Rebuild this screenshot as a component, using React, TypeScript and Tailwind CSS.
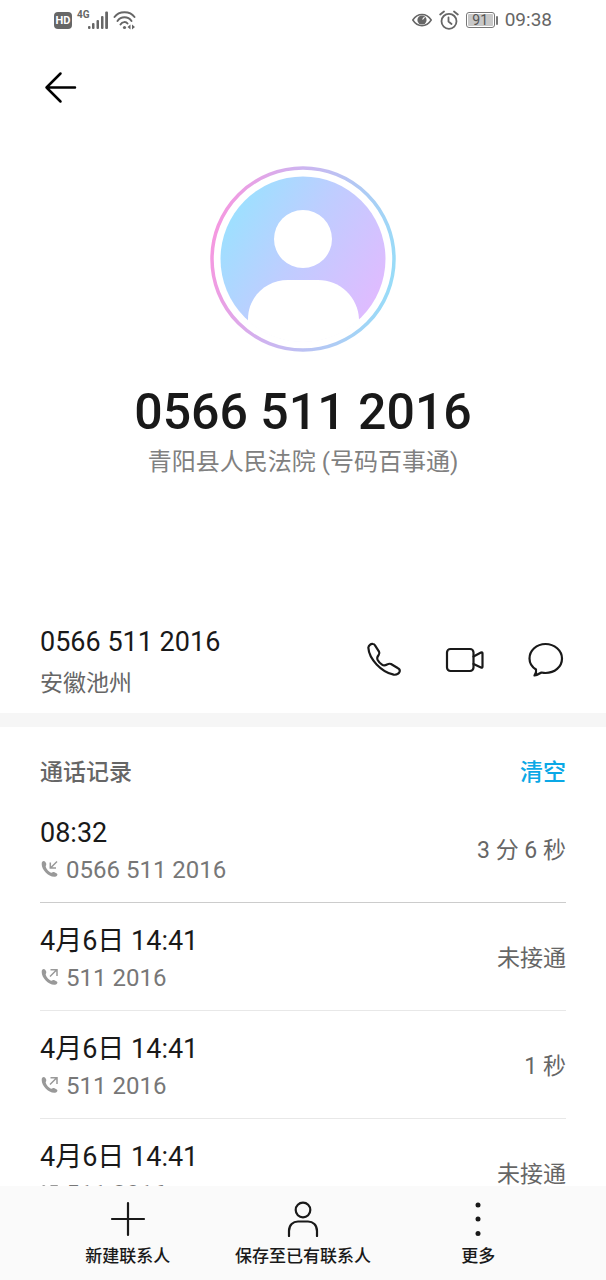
import React from 'react';

interface CallRecord {
  time: string;
  number: string;
  result: string;
  direction: 'in' | 'out';
}

const records: CallRecord[] = [
  { time: '08:32', number: '0566 511 2016', result: '3 分 6 秒', direction: 'in' },
  { time: '4月6日 14:41', number: '511 2016', result: '未接通', direction: 'out' },
  { time: '4月6日 14:41', number: '511 2016', result: '1 秒', direction: 'out' },
  { time: '4月6日 14:41', number: '511 2016', result: '未接通', direction: 'out' },
];

const StatusBar: React.FC = () => (
  <div className="flex h-10 shrink-0 items-center justify-between px-[54px] text-[#666]">
    <div className="flex items-center gap-1">
      <span className="flex h-[17px] w-[18px] items-center justify-center rounded-sm bg-[#666] text-[11px] font-bold leading-none text-white">HD</span>
      <svg viewBox="0 0 32 22" className="h-[22px] w-8" fill="currentColor">
        <text x="1" y="9" fontSize="10" fontWeight="700">4G</text>
        <rect x="12" y="17" width="2.500" height="3" rx="1" />
        <rect x="16" y="14" width="2.500" height="6" rx="1" />
        <rect x="20.500" y="11" width="2.500" height="9" rx="1" />
        <rect x="25" y="7" width="2.500" height="13" rx="1" />
        <rect x="29.200" y="2.500" width="2.800" height="17.500" rx="1" />
      </svg>
      <svg viewBox="0 0 24 22" className="h-[22px] w-6" fill="none" stroke="currentColor" strokeWidth="2" strokeLinecap="round">
        <path d="M2.500 8 C7 1.500 18 1.500 22.500 8" />
        <path d="M5.500 12 C9 7 16 7 19.500 12" />
        <path d="M8.500 15.500 C10.500 12.500 14 12.500 15.500 14.500" />
        <circle cx="12.500" cy="18.500" r="1.600" fill="currentColor" stroke="none" />
        <path d="M18.500 15.500 L15.500 18 L18.500 20.500Z M20 15.500 L23 18 L20 20.500Z" fill="currentColor" stroke="none" />
      </svg>
    </div>
    <div className="flex items-center gap-[7px]">
      <svg viewBox="0 0 20 20" className="h-5 w-5" fill="none" stroke="currentColor" strokeWidth="1.500">
        <path d="M.8 10 C5.500 2.500 14.500 2.500 19.200 10 C14.500 17.500 5.500 17.500 .8 10Z" />
        <circle cx="10" cy="10" r="4.600" fill="currentColor" stroke="none" />
        <path d="M10.500 9.500 L12.500 7" stroke="#fff" strokeWidth="1.200" />
      </svg>
      <svg viewBox="0 0 20 20" className="h-5 w-5" fill="none" stroke="currentColor" strokeWidth="1.800" strokeLinecap="round" strokeLinejoin="round">
        <circle cx="10" cy="11.300" r="7.500" />
        <path d="M9.500 7.500 V11.500 L12.500 14 M1.200 4.500 L5 1.500 M18.800 4.500 L15 1.500" />
      </svg>
      <div className="flex items-center gap-px">
        <span className="flex h-4 w-[29px] rounded-[3px] border border-[#777] p-px">
          <span className="flex w-[25px] items-center justify-center rounded-[1px] bg-[#c8c8c8] text-[14px] leading-none text-[#555]">91</span>
        </span>
        <span className="h-[9px] w-[2px] rounded-sm bg-[#777]" />
      </div>
      <span className="text-[19px] leading-6">09:38</span>
    </div>
  </div>
);

const Avatar: React.FC = () => (
  <svg viewBox="0 0 186 186" className="h-[186px] w-[186px]" role="img" aria-label="头像">
    <defs>
      <linearGradient id="ring" x1="0" y1="0.400" x2="1" y2="0.600">
        <stop offset="0" stopColor="#f598e0" />
        <stop offset="0.400" stopColor="#cdb4f0" />
        <stop offset="1" stopColor="#98dcf8" />
      </linearGradient>
      <linearGradient id="disc" x1="0.080" y1="0.250" x2="0.920" y2="0.750">
        <stop offset="0" stopColor="#9fdfff" />
        <stop offset="0.450" stopColor="#bfcdff" />
        <stop offset="1" stopColor="#debcff" />
      </linearGradient>
      <clipPath id="discClip">
        <circle cx="93" cy="93" r="83" />
      </clipPath>
    </defs>
    <circle cx="93" cy="93" r="91" fill="none" stroke="url(#ring)" strokeWidth="3.500" />
    <circle cx="93" cy="93" r="82.500" fill="url(#disc)" />
    <g clipPath="url(#discClip)" fill="#fff">
      <circle cx="93" cy="73" r="29" />
      <path d="M38 153 C38 131 56 114 78 114 H108 C130 114 148 131 149 153 V186 H38Z" />
    </g>
  </svg>
);

const CallIcon: React.FC<{ direction: 'in' | 'out' }> = ({ direction }) => (
  <svg viewBox="0 0 18 18" className="mb-[3px] h-[18px] w-[18px]" fill="none" stroke="#999" strokeWidth="1.500">
    <path
      d="M2 2 C3.500 .2 5 .8 6 3 C6.900 5 5.300 5.500 5.800 7 C6.500 9.500 9 12 11 12.700 C12.500 13 13 11.500 14.500 12.200 L16.800 13.500 C18.200 14.500 17 16.500 15 16.800 C8 17.500 0 8 2 2Z"
      fill="#999"
      stroke="none"
    />
    {direction === 'in' ? (
      <path d="M17 1.500 L10.500 8 M10.300 2.500 V8 H16" />
    ) : (
      <path d="M10 8.500 L16.500 2 M10.500 1.700 H17 V8" />
    )}
  </svg>
);

const CallRow: React.FC<{ record: CallRecord; first: boolean }> = ({ record, first }) => (
  <li className={`flex items-center justify-between border-b pt-5 pb-[13px] ${first ? 'border-[#cccccc]' : 'border-[#e8e8e8]'}`}>
    <div>
      <div className="text-[27px] leading-9 text-[#191919]">{record.time}</div>
      <div className="flex items-center gap-2 text-[24px] leading-[38px] text-[#777]">
        <CallIcon direction={record.direction} />
        <span>{record.number}</span>
      </div>
    </div>
    <div className="pb-[2px] text-[23px] leading-9 text-[#666]">{record.result}</div>
  </li>
);

const actionClass = 'flex h-10 w-10 items-center justify-center';
const navClass = 'flex flex-1 flex-col items-center gap-[7px] whitespace-nowrap text-[17px] font-medium leading-6';

const App: React.FC = () => {
  return (
    <div lang="zh-CN" className="flex h-dvh flex-col bg-white font-['Roboto','Noto_Sans_CJK_SC',sans-serif] text-[#191919]">
      <StatusBar />
      <header className="flex h-24 shrink-0 items-center px-10">
        <button aria-label="返回" className="flex h-10 w-10 items-center justify-center">
          <svg viewBox="0 0 40 40" className="h-10 w-10" fill="none" stroke="#000" strokeWidth="2.500" strokeLinecap="round" strokeLinejoin="round">
            <path d="M35 19.500 H6.500 M20.500 5.500 L6.500 19.500 L20.500 33.500" />
          </svg>
        </button>
      </header>

      <main className="min-h-0 flex-1 overflow-y-auto [scrollbar-width:none]">
        <section className="flex flex-col items-center pt-[30px] pb-[141px]">
          <Avatar />
          <h1 className="mt-7 text-[50px] font-medium leading-[64px]">0566 511 2016</h1>
          <p className="text-[24px] leading-9 text-[#808080]">青阳县人民法院 (号码百事通)</p>
        </section>

        <section className="flex items-center justify-between px-10 pb-2">
          <div>
            <div className="text-[27px] leading-[42px]">0566 511 2016</div>
            <div className="text-[23px] leading-[42px] text-[#666]">安徽池州</div>
          </div>
          <div className="flex gap-[41px] pb-[6px]">
            <button aria-label="拨打电话" className={actionClass}>
              <svg viewBox="0 0 108 108" className="h-9 w-9 shrink-0" fill="none" stroke="#191919" strokeWidth="6.500" strokeLinecap="round" strokeLinejoin="round">
                <path d="M7 17 C8 10 14 5 21 6 Q25 6 27 10 L39 29 Q42 34 38 39 C33 45 32 48 35 54 Q40 63 48 68 C55 73 59 70 64 67 Q69 64 75 66 L95 78 Q103 82 101 89 C98 96 91 99 83 98 C46 90 9 51 7 17Z" />
              </svg>
            </button>
            <button aria-label="视频通话" className={actionClass}>
              <svg viewBox="0 0 40 40" className="h-10 w-10 shrink-0" fill="none" stroke="#191919" strokeWidth="2.200" strokeLinecap="round" strokeLinejoin="round">
                <rect x="2" y="9" width="26.500" height="22" rx="3.500" />
                <path d="M28.500 16.500 L36 12.500 Q37.500 12 37.500 13.500 V26.500 Q37.500 28 36 27.500 L28.500 24" />
              </svg>
            </button>
            <button aria-label="发送信息" className={actionClass}>
              <svg viewBox="0 0 40 40" className="h-10 w-10 shrink-0" fill="none" stroke="#191919" strokeWidth="2.200" strokeLinecap="round" strokeLinejoin="round">
                <path d="M8.500 35.500 C10 33.500 10.500 31.500 10 29.500 C6 27 3.500 23 3.500 18.500 C3.500 10.500 10.500 4 19.500 4 C28.500 4 36 10.500 36 18.500 C36 27 28.500 33 19.500 33 C18 33 17 32.800 15.500 32.500 C13 34 11 35 8.500 35.500Z" />
              </svg>
            </button>
          </div>
        </section>

        <div className="h-[14px] bg-[#f6f6f6]" />

        <section className="px-10">
          <div className="flex items-center justify-between pt-[26px] pb-[2px] text-[23px] font-medium leading-10">
            <h2 className="text-[#666]">通话记录</h2>
            <button className="text-[#0aa8e6]">清空</button>
          </div>
          <ul>
            {records.map((record, i) => (
              <CallRow key={i} record={record} first={i === 0} />
            ))}
          </ul>
        </section>
      </main>

      <nav className="flex shrink-0 bg-[#fafafa] px-10 pt-[15px] pb-3">
        <button className={navClass}>
          <svg viewBox="0 0 36 36" className="h-9 w-9" fill="none" stroke="#191919" strokeWidth="2.200" strokeLinecap="round">
            <path d="M18 2 V34 M2 18 H34" />
          </svg>
          新建联系人
        </button>
        <button className={navClass}>
          <svg viewBox="0 0 36 36" className="h-9 w-9" fill="none" stroke="#191919" strokeWidth="2.200" strokeLinecap="round">
            <circle cx="18" cy="9" r="7.300" />
            <path d="M4 35 V30 C4 24 8 20.500 13 20.500 H23 C28 20.500 32 24 32 30 V35" />
          </svg>
          保存至已有联系人
        </button>
        <button className={navClass}>
          <svg viewBox="0 0 36 36" className="h-9 w-9" fill="#191919">
            <circle cx="18" cy="4" r="2.500" />
            <circle cx="18" cy="18" r="2.500" />
            <circle cx="18" cy="32.500" r="2.500" />
          </svg>
          更多
        </button>
      </nav>
    </div>
  );
};

export default App;
